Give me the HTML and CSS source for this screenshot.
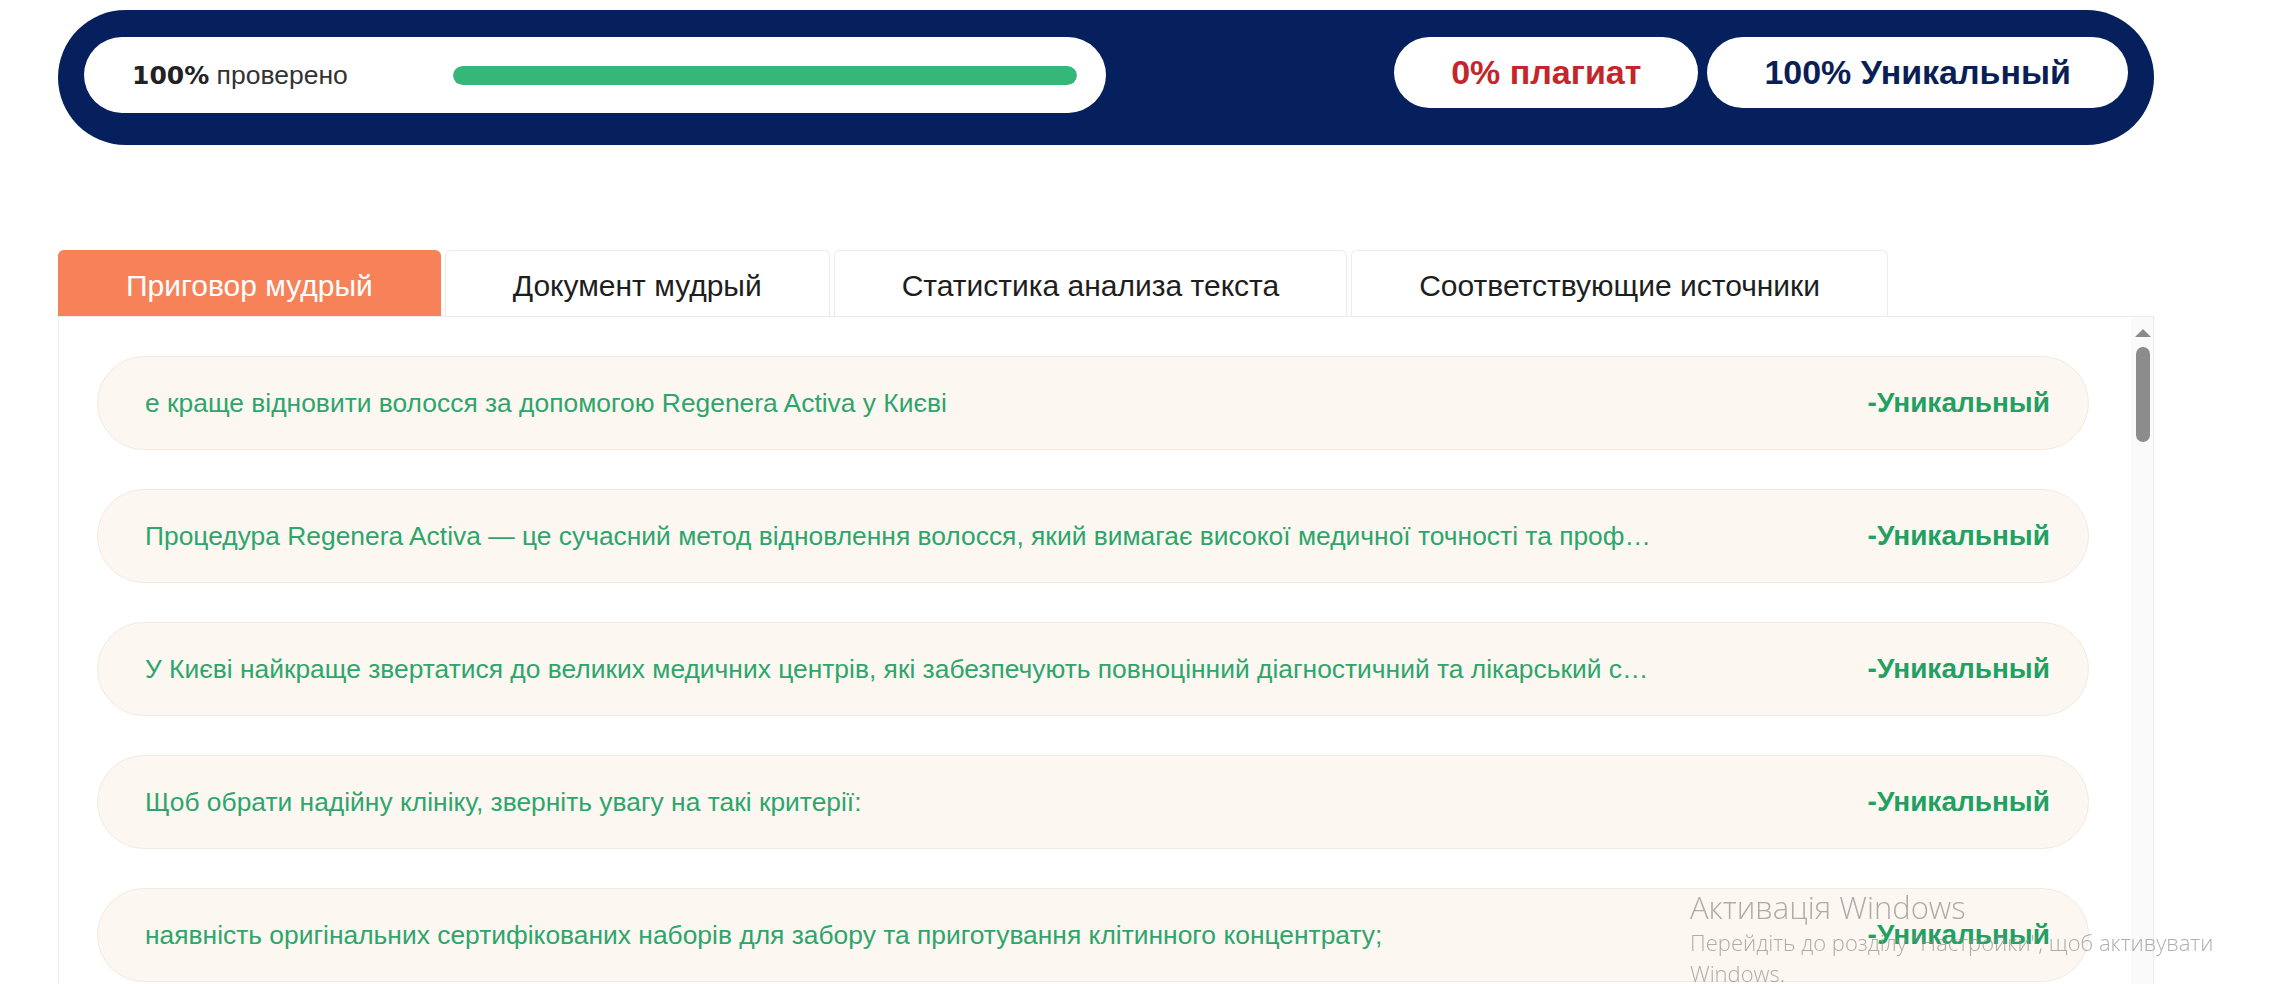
FILE: index.html
```html
<!DOCTYPE html>
<html>

<head>
    <title>Проверка на плагиат</title>
    <meta charset="utf-8">
    <meta name="viewport" content="width=device-width, initial-scale=1">
    <link rel="stylesheet" href="styles.css">
</head>

<body>
    <div class="page">
        <!-- итог проверки -->
        <header class="summary">
            <div class="progress-pill">
                <span class="progress-label"><b>100%</b> проверено</span>
                <div class="progress-track">
                    <div class="progress-fill" style="width: 100%;"></div>
                </div>
            </div>
            <div class="score-group">
                <span class="score score-plagiat">0% плагиат</span>
                <span class="score score-unique">100% Уникальный</span>
            </div>
        </header>

        <nav class="tabs">
            <span class="tab active">Приговор мудрый</span>
            <span class="tab">Документ мудрый</span>
            <span class="tab">Статистика анализа текста</span>
            <span class="tab">Соответствующие источники</span>
        </nav>

        <section class="panel">
            <div class="sentence-list">
                <div class="sentence">
                    <span class="sentence-text">е краще відновити волосся за допомогою Regenera Activa у Києві</span>
                    <span class="sentence-status">-Уникальный</span>
                </div>
                <div class="sentence">
                    <span class="sentence-text">Процедура Regenera Activa — це сучасний метод відновлення волосся, який вимагає високої медичної точності та професіоналізму лікаря.</span>
                    <span class="sentence-status">-Уникальный</span>
                </div>
                <div class="sentence">
                    <span class="sentence-text">У Києві найкраще звертатися до великих медичних центрів, які забезпечують повноцінний діагностичний та лікарський супровід пацієнта.</span>
                    <span class="sentence-status">-Уникальный</span>
                </div>
                <div class="sentence">
                    <span class="sentence-text">Щоб обрати надійну клініку, зверніть увагу на такі критерії:</span>
                    <span class="sentence-status">-Уникальный</span>
                </div>
                <div class="sentence">
                    <span class="sentence-text">наявність оригінальних сертифікованих наборів для забору та приготування клітинного концентрату;</span>
                    <span class="sentence-status">-Уникальный</span>
                </div>
                <div class="sentence">
                    <span class="sentence-text">досвід трихолога у проведенні процедури та відгуки пацієнтів;</span>
                    <span class="sentence-status">-Уникальный</span>
                </div>
            </div>
            <div class="scrollbar">
                <span class="scroll-arrow"></span>
                <span class="scroll-thumb"></span>
            </div>
        </section>
    </div>

    <div class="activation">
        <div class="activation-title">Активація Windows</div>
        <div class="activation-text">Перейдіть до розділу "Настройки", щоб активувати Windows.</div>
    </div>
</body>

</html>
```

FILE: styles.css
```css
body,
html {
    height: 100%;
    margin: 0;
    overflow: hidden;
}

body {
    background-color: #fff;
    font-family: 'Liberation Sans', Arial, sans-serif;
    color: #222;
}

.page {
    width: 2096px;
    padding: 10px 0 0 58px;
}

/* верхняя синяя плашка */
.summary {
    display: flex;
    justify-content: space-between;
    align-items: flex-start;
    height: 135px;
    box-sizing: border-box;
    padding: 27px 26px 0 26px;
    background-color: #05205c;
    border-radius: 68px;
}

.progress-pill {
    display: flex;
    align-items: center;
    width: 1022px;
    height: 76px;
    box-sizing: border-box;
    padding: 0 29px 0 48px;
    background-color: #fff;
    border-radius: 38px;
}

.progress-label {
    flex: 0 0 321px;
    font-size: 26.5px;
    color: #333;
}

.progress-label b {
    font-family: 'DejaVu Sans', Verdana, sans-serif;
    font-size: 25px;
    color: #222;
}

.progress-track {
    flex: 1;
    height: 19px;
    border-radius: 10px;
    background-color: #e6e6e6;
    overflow: hidden;
}

.progress-fill {
    height: 100%;
    background-color: #35b779;
    border-radius: 10px;
}

.score-group {
    display: flex;
    gap: 9px;
}

.score {
    display: flex;
    align-items: center;
    height: 71px;
    padding: 0 57px;
    background-color: #fff;
    border-radius: 36px;
    font-size: 34px;
    font-weight: bold;
}

.score-plagiat {
    color: #c3262b;
}

.score-unique {
    color: #0a1f55;
}

/* вкладки */
.tabs {
    display: flex;
    gap: 4px;
    margin-top: 105px;
}

.tab {
    display: flex;
    align-items: center;
    height: 66px;
    box-sizing: border-box;
    padding: 4px 67px 0;
    font-size: 30px;
    color: #1e1e1e;
    background-color: #fff;
    border: 1px solid #ececec;
    border-bottom: none;
    border-radius: 6px 6px 0 0;
    cursor: pointer;
}

.tab.active {
    background-color: #f7825a;
    border-color: #f7825a;
    color: #fff;
}

/* список предложений */
.panel {
    display: flex;
    height: 720px;
    border: 1px solid #ececec;
}

.sentence-list {
    flex: 1;
    display: flex;
    flex-direction: column;
    gap: 39px;
    padding: 39px 42px 0 38px;
    overflow: hidden;
}

.sentence {
    display: flex;
    align-items: center;
    flex: 0 0 94px;
    box-sizing: border-box;
    padding: 0 38px 0 47px;
    background-color: #fdf7f2;
    border: 1px solid #f2eae2;
    border-radius: 47px;
}

.sentence-text {
    max-width: 1508px;
    font-size: 26.4px;
    color: #2ea56b;
    white-space: nowrap;
    overflow: hidden;
    text-overflow: ellipsis;
}

.sentence-status {
    margin-left: auto;
    font-size: 28px;
    font-weight: bold;
    color: #22a062;
    white-space: nowrap;
}

.scrollbar {
    display: flex;
    flex-direction: column;
    align-items: center;
    width: 21px;
    padding-left: 1px;
    background-color: #fafafa;
}

.scroll-arrow {
    width: 0;
    height: 0;
    margin-top: 12px;
    border-left: 8px solid transparent;
    border-right: 8px solid transparent;
    border-bottom: 8px solid #8a8a8a;
}

.scroll-thumb {
    width: 14px;
    height: 95px;
    margin-top: 10px;
    border-radius: 7px;
    background-color: #8c8c8c;
}

/* системная надпись поверх страницы */
.activation {
    position: fixed;
    left: 1690px;
    top: 887px;
    font-family: 'Open Sans', 'Noto Sans', sans-serif;
    font-weight: 300;
    color: rgba(140, 140, 140, 0.7);
    pointer-events: none;
}

.activation-title {
    font-size: 31px;
    line-height: 40px;
}

.activation-text {
    width: 600px;
    font-size: 22px;
    line-height: 31px;
}
```
